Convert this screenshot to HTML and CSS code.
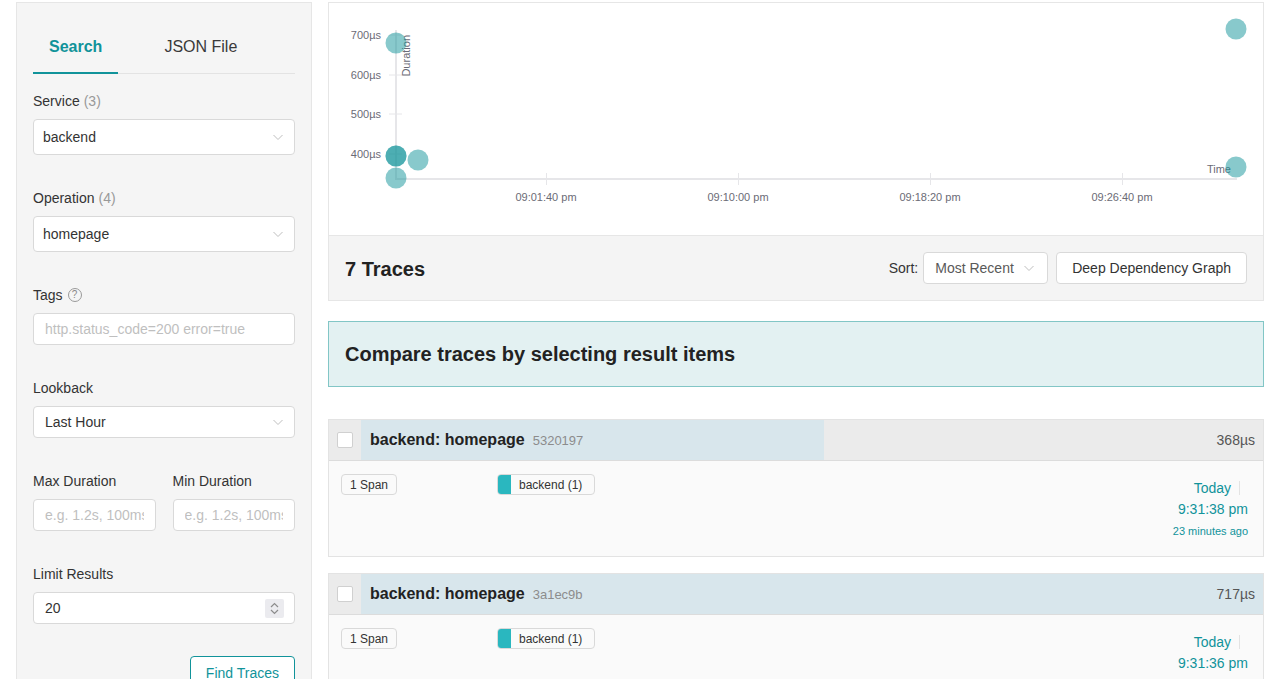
FILE: index.html
```html
<!DOCTYPE html>
<html lang="en">
<head>
<meta charset="utf-8">
<title>Search Traces</title>
<link rel="stylesheet" href="styles.css">
</head>
<body>
<div class="page">
  <aside class="sidebar">
    <div class="tabs">
      <div class="tab active">Search</div>
      <div class="tab">JSON File</div>
    </div>
    <div class="form">
      <div class="field">
        <div class="label">Service <span class="count">(3)</span></div>
        <div class="select tall"><span class="value">backend</span><svg class="chev" width="12" height="12" viewBox="0 0 12 12"><path d="M1.5 4 L6 8.5 L10.5 4" fill="none" stroke="#bfbfbf" stroke-width="1"/></svg></div>
      </div>
      <div class="field">
        <div class="label">Operation <span class="count">(4)</span></div>
        <div class="select tall"><span class="value">homepage</span><svg class="chev" width="12" height="12" viewBox="0 0 12 12"><path d="M1.5 4 L6 8.5 L10.5 4" fill="none" stroke="#bfbfbf" stroke-width="1"/></svg></div>
      </div>
      <div class="field">
        <div class="label">Tags <span class="help">?</span></div>
        <input class="input" type="text" placeholder="http.status_code=200 error=true">
      </div>
      <div class="field">
        <div class="label">Lookback</div>
        <div class="select pad11"><span class="value">Last Hour</span><svg class="chev" width="12" height="12" viewBox="0 0 12 12"><path d="M1.5 4 L6 8.5 L10.5 4" fill="none" stroke="#bfbfbf" stroke-width="1"/></svg></div>
      </div>
      <div class="field two">
        <div class="col">
          <div class="label">Max Duration</div>
          <input class="input" type="text" placeholder="e.g. 1.2s, 100ms, 500us">
        </div>
        <div class="col">
          <div class="label">Min Duration</div>
          <input class="input" type="text" placeholder="e.g. 1.2s, 100ms, 500us">
        </div>
      </div>
      <div class="field">
        <div class="label">Limit Results</div>
        <div class="number"><span class="value">20</span>
          <span class="stepper"><svg width="19" height="19" viewBox="0 0 19 19"><path d="M6 8 L9.5 4.5 L13 8" fill="none" stroke="#8c8c8c" stroke-width="1.2"/><path d="M6 11 L9.5 14.5 L13 11" fill="none" stroke="#8c8c8c" stroke-width="1.2"/></svg></span>
        </div>
      </div>
      <div class="actions"><button class="btn-find" type="button">Find Traces</button></div>
    </div>
  </aside>

  <main class="main">
    <section class="card">
      <div class="chart">
        <svg width="934" height="232" viewBox="0 0 934 232" class="plot">
          <g stroke="#e6e6e9" stroke-width="1">
            <line x1="60" y1="32" x2="73" y2="32"/>
            <line x1="60" y1="72" x2="73" y2="72"/>
            <line x1="60" y1="111" x2="73" y2="111"/>
            <line x1="60" y1="151" x2="73" y2="151"/>
            <line x1="217.5" y1="170" x2="217.5" y2="182"/>
            <line x1="409.5" y1="170" x2="409.5" y2="182"/>
            <line x1="601.5" y1="170" x2="601.5" y2="182"/>
            <line x1="793.5" y1="170" x2="793.5" y2="182"/>
          </g>
          <line x1="67" y1="27" x2="67" y2="177" stroke="#e6e6e9" stroke-width="2"/>
          <line x1="66" y1="176" x2="908" y2="176" stroke="#e6e6e9" stroke-width="2"/>
          <g class="tick" text-anchor="end">
            <text x="52" y="36">700µs</text>
            <text x="52" y="76">600µs</text>
            <text x="52" y="115">500µs</text>
            <text x="52" y="155">400µs</text>
          </g>
          <g class="tick" text-anchor="middle">
            <text x="217" y="198">09:01:40 pm</text>
            <text x="409" y="198">09:10:00 pm</text>
            <text x="601" y="198">09:18:20 pm</text>
            <text x="793" y="198">09:26:40 pm</text>
          </g>
          <text class="tick" transform="translate(81,32) rotate(-90)" text-anchor="end">Duration</text>
          <text class="tick" x="902" y="170" text-anchor="end">Time</text>
          <g fill="#12939a" fill-opacity="0.5">
            <circle cx="67" cy="40" r="10.5"/>
            <circle cx="67" cy="153" r="10.5"/>
            <circle cx="67" cy="153" r="10.5"/>
            <circle cx="89" cy="157" r="10.5"/>
            <circle cx="67" cy="175" r="10.5"/>
            <circle cx="907" cy="26" r="10.5"/>
            <circle cx="907" cy="164" r="10.5"/>
          </g>
        </svg>
      </div>
      <div class="results-head">
        <h2 class="count-title">7 Traces</h2>
        <div class="head-right">
          <span class="sort-label">Sort:</span>
          <div class="select sort"><span class="value">Most Recent</span><svg class="chev" width="12" height="12" viewBox="0 0 12 12"><path d="M1.5 4 L6 8.5 L10.5 4" fill="none" stroke="#bfbfbf" stroke-width="1"/></svg></div>
          <button class="btn" type="button">Deep Dependency Graph</button>
        </div>
      </div>
    </section>

    <div class="compare">Compare traces by selecting result items</div>

    <div class="traces">
      <article class="trace">
        <div class="trace-head">
          <div class="check-cell"><span class="checkbox"></span></div>
          <div class="title-area" style="--ratio:51.3%">
            <span class="trace-name">backend: homepage</span>
            <span class="trace-id">5320197</span>
            <span class="duration">368µs</span>
          </div>
        </div>
        <div class="trace-body">
          <div class="col-spans"><span class="tag">1 Span</span></div>
          <div class="col-services"><span class="tag svc"><span class="swatch"></span>backend (1)</span></div>
          <div class="col-time">
            <div class="day">Today<span class="divider"></span></div>
            <div class="clock">9:31:38 pm</div>
            <div class="ago">23 minutes ago</div>
          </div>
        </div>
      </article>

      <article class="trace">
        <div class="trace-head">
          <div class="check-cell"><span class="checkbox"></span></div>
          <div class="title-area" style="--ratio:100%">
            <span class="trace-name">backend: homepage</span>
            <span class="trace-id">3a1ec9b</span>
            <span class="duration">717µs</span>
          </div>
        </div>
        <div class="trace-body">
          <div class="col-spans"><span class="tag">1 Span</span></div>
          <div class="col-services"><span class="tag svc"><span class="swatch"></span>backend (1)</span></div>
          <div class="col-time">
            <div class="day">Today<span class="divider"></span></div>
            <div class="clock">9:31:36 pm</div>
            <div class="ago">23 minutes ago</div>
          </div>
        </div>
      </article>
    </div>
  </main>
</div>
</body>
</html>
```

FILE: styles.css
```css
* { box-sizing: border-box; }
html, body { margin: 0; padding: 0; overflow: hidden; background: #fff; }
body {
  font-family: "Liberation Sans", Arial, Helvetica, sans-serif;
  font-size: 14px;
  color: #333;
}

.page {
  display: flex;
  align-items: flex-start;
  gap: 16px;
  padding: 2px 10px 0 16px;
  height: 679px;
  overflow: hidden;
}

/* Sidebar */
.sidebar {
  flex: 0 0 296px;
  width: 296px;
  min-height: 720px;
  background: #f5f5f5;
  border: 1px solid #e6e6e6;
  padding: 0 16px 24px;
}
.tabs {
  display: flex;
  gap: 30px;
  border-bottom: 1px solid #e3e3e3;
}
.tab {
  padding: 33px 16px 14px;
  line-height: 22px;
  font-size: 16px;
  color: #3a3a3a;
  border-bottom: 2px solid transparent;
  margin-bottom: -1px;
}
.tab.active {
  color: #11939a;
  font-weight: 600;
  border-bottom-color: #11939a;
}

.form { margin-top: 16px; }
.field { margin-bottom: 32px; }
.label {
  line-height: 22px;
  margin-bottom: 7px;
  color: #333;
  display: flex;
  align-items: center;
  gap: 4px;
}
.count { color: #999; }
.help {
  display: inline-flex;
  align-items: center;
  justify-content: center;
  width: 14px;
  height: 14px;
  border: 1px solid #9a9a9a;
  border-radius: 50%;
  font-size: 10px;
  line-height: 1;
  color: #8a8a8a;
  margin-left: 1px;
}

.select, .input, .number {
  display: flex;
  align-items: center;
  height: 32px;
  width: 100%;
  background: #fff;
  border: 1px solid #d9d9d9;
  border-radius: 4px;
  padding: 0 10px;
  font-family: inherit;
  font-size: 14px;
  color: #333;
}
.select.tall { height: 36px; padding-left: 9px; }
.select.pad11 { padding-left: 11px; }
.select .value { flex: 1; }
.chev { flex: 0 0 auto; }
.input { padding: 0 11px; outline: none; }
.input::placeholder { color: #bfbfbf; }

.two { display: grid; grid-template-columns: 1fr 1fr; gap: 17px; }

.number { padding: 0 10px 0 11px; }
.number .value { flex: 1; }
.stepper {
  display: flex;
  width: 19px;
  height: 19px;
  background: #ebebef;
  border-radius: 2px;
}

.actions { display: flex; justify-content: flex-end; }
.btn-find {
  height: 34px;
  padding: 0 15px;
  background: #fff;
  border: 1px solid #11939a;
  border-radius: 4px;
  color: #11939a;
  font-family: inherit;
  font-size: 14px;
}

/* Main */
.main {
  flex: 1 1 auto;
  min-width: 0;
}
.card {
  border: 1px solid #e6e6e6;
  background: #fff;
}
.chart { height: 232px; }
.plot { display: block; }
.tick {
  font-family: "Liberation Sans", Arial, sans-serif;
  font-size: 11px;
  fill: #6b6b76;
}

.results-head {
  display: flex;
  align-items: center;
  justify-content: space-between;
  height: 65px;
  border-top: 1px solid #e6e6e6;
  background: #f4f4f4;
  padding: 0 16px;
}
.count-title {
  margin: 0;
  font-size: 20px;
  font-weight: bold;
  color: #222;
  padding-top: 2px;
}
.head-right { display: flex; align-items: center; }
.sort-label { margin-right: 5px; color: #333; }
.select.sort {
  width: 125px;
  padding: 0 12px 0 11px;
  color: #595959;
  margin-right: 8px;
}
.btn {
  height: 32px;
  padding: 0 15px;
  background: #fff;
  border: 1px solid #d9d9d9;
  border-radius: 4px;
  font-family: inherit;
  font-size: 14px;
  color: #333;
}

.compare {
  margin-top: 20px;
  height: 66px;
  display: flex;
  align-items: center;
  padding: 0 16px;
  background: #e3f1f2;
  border: 1px solid #82c6c6;
  font-size: 20px;
  font-weight: bold;
  color: #222;
}

.traces { margin-top: 32px; display: flex; flex-direction: column; gap: 16px; }
.trace {
  border: 1px solid #e3e3e3;
  background: #fafafa;
}
.trace-head {
  display: flex;
  height: 41px;
  border-bottom: 1px solid #dcdcdc;
  background: #ebebeb;
}
.check-cell {
  flex: 0 0 32px;
  display: flex;
  align-items: center;
  justify-content: center;
}
.checkbox {
  width: 16px;
  height: 16px;
  background: #fff;
  border: 1px solid #d0d0d0;
  border-radius: 2px;
}
.title-area {
  flex: 1;
  display: flex;
  align-items: center;
  padding: 0 8px 0 9px;
  background: linear-gradient(to right, #d8e6ec var(--ratio), #ebebeb var(--ratio));
}
.trace-name { font-size: 16px; font-weight: bold; color: #222; }
.trace-id { font-size: 13px; color: #8c8c8c; margin-left: 8px; }
.duration { margin-left: auto; color: #555; font-size: 14px; }

.trace-body {
  display: flex;
  align-items: flex-start;
  height: 95px;
  padding: 13px 15px 12px 12px;
}
.col-spans { flex: 0 0 156px; }
.col-services { flex: 1; }
.tag {
  display: inline-flex;
  align-items: center;
  height: 21px;
  padding: 0 8px;
  border: 1px solid #d9d9d9;
  border-radius: 4px;
  background: #fafafa;
  font-size: 12px;
  color: #333;
}
.tag.svc { padding: 0 12px 0 0; overflow: hidden; }
.swatch {
  align-self: stretch;
  width: 14px;
  margin: -1px 8px -1px -1px;
  background: #2ab7bf;
  border-radius: 4px 0 0 4px;
}
.col-time {
  margin-top: 4px;
  text-align: right;
  color: #11939a;
}
.day { line-height: 20px; display: flex; align-items: center; justify-content: flex-end; }
.divider {
  display: inline-block;
  width: 1px;
  height: 14px;
  background: #e3e3e3;
  margin: 0 8px;
}
.clock { line-height: 22px; font-size: 14px; }
.ago { line-height: 22px; font-size: 11px; }
```
